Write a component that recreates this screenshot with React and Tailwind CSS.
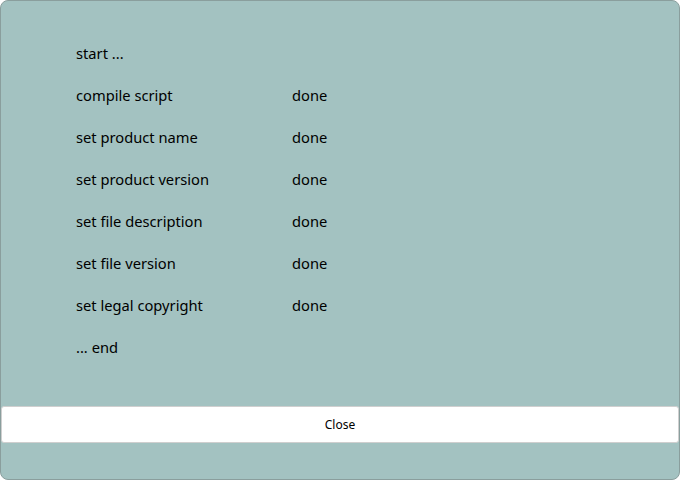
import React from 'react'

const steps = [
  ['start ...', ''],
  ['compile script', 'done'],
  ['set product name', 'done'],
  ['set product version', 'done'],
  ['set file description', 'done'],
  ['set file version', 'done'],
  ['set legal copyright', 'done'],
  ['... end', ''],
]

export default function App() {
  return (
    <div className="w-[680px] h-[480px] bg-[#a3c2c1] border border-[#8a9e9d] rounded-lg flex flex-col font-['Noto_Sans',sans-serif] text-black overflow-hidden">
      <div className="pt-[31px] pl-[75px] flex flex-col">
        {steps.map(([label, status], i) => (
          <div key={i} className="h-[42px] flex items-center text-[14.7px]">
            <span className="w-[216px]">{label}</span>
            <span>{status}</span>
          </div>
        ))}
      </div>
      <button className="mt-[38px] h-[37px] bg-white border border-[#cfcfcf] rounded-[3px] text-[12px]">
        Close
      </button>
    </div>
  )
}
